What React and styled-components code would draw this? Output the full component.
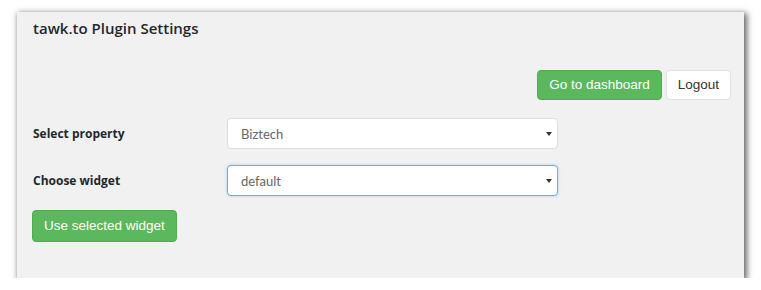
import React, { useState } from 'react';
import styled, { createGlobalStyle } from 'styled-components';

const GlobalStyle = createGlobalStyle`
    body {
        margin: 0;
        background: #fff;
    }
`;

export default function App() {
    const [property, setProperty] = useState('biztech');
    const [widget, setWidget] = useState('default');

    return (
        <Page>
            <GlobalStyle />
            <Panel>
                <Title>tawk.to Plugin Settings</Title>
                <Actions>
                    <Button $variant="success">Go to dashboard</Button>
                    <Button>Logout</Button>
                </Actions>
                <Form>
                    <Label htmlFor="property">Select property</Label>
                    <SelectWrap>
                        <Select
                            id="property"
                            value={property}
                            onChange={(e) => setProperty(e.target.value)}>
                            <option value="biztech">Biztech</option>
                        </Select>
                    </SelectWrap>
                    <Label htmlFor="widget">Choose widget</Label>
                    <SelectWrap>
                        <Select
                            id="widget"
                            $focused
                            value={widget}
                            onChange={(e) => setWidget(e.target.value)}>
                            <option value="default">default</option>
                        </Select>
                    </SelectWrap>
                </Form>
                <Footer>
                    <Button $variant="success" $tall>Use selected widget</Button>
                </Footer>
            </Panel>
        </Page>
    );
}

const Page = styled.div`
    padding: 12px 0 0 17px;
`;

const Panel = styled.div`
    box-sizing: border-box;
    width: 727px;
    height: 266px;
    background: #f1f1f1;
    padding: 6px 13px 0 15px;
    box-shadow: 2px 2px 6px 1px rgba(0, 0, 0, 0.6);
    display: flex;
    flex-direction: column;
`;

const Title = styled.h1`
    margin: 0 0 0 1px;
    font-family: 'Open Sans', sans-serif;
    font-size: 15px;
    font-weight: 600;
    line-height: 20px;
    color: #23282d;
`;

const Actions = styled.div`
    display: flex;
    justify-content: flex-end;
    gap: 4px;
    margin-top: 32px;
`;

const Button = styled.button`
    box-sizing: border-box;
    height: ${(p) => (p.$tall ? '32px' : '30px')};
    padding: 0 11px;
    border-radius: 4px;
    font-family: 'Liberation Sans', Arial, sans-serif;
    font-size: 13.5px;
    line-height: 1;
    cursor: pointer;
    border: 1px solid ${(p) => (p.$variant === 'success' ? '#4cae4c' : '#e2e2e2')};
    background: ${(p) => (p.$variant === 'success' ? '#5cb85c' : '#fff')};
    color: ${(p) => (p.$variant === 'success' ? '#fff' : '#333')};
`;

const Form = styled.div`
    display: grid;
    grid-template-columns: 195px 331px;
    row-gap: 16px;
    align-items: center;
    margin-top: 18px;
`;

const Label = styled.label`
    padding-left: 1px;
    font-family: 'Open Sans', sans-serif;
    font-size: 12px;
    font-weight: 700;
    color: #23282d;
`;

const SelectWrap = styled.div`
    position: relative;

    &::after {
        content: '';
        position: absolute;
        right: 6px;
        top: 14px;
        border-left: 3px solid transparent;
        border-right: 3px solid transparent;
        border-top: 4px solid #333;
        pointer-events: none;
    }
`;

const Select = styled.select`
    box-sizing: border-box;
    width: 331px;
    height: 31px;
    appearance: none;
    padding: 0 24px 0 13px;
    border-radius: 4px;
    background: #fff;
    font-family: Lato, sans-serif;
    font-size: 13px;
    color: #666;
    outline: none;
    border: 1px solid ${(p) => (p.$focused ? '#66afe9' : '#ddd')};
    box-shadow: ${(p) => (p.$focused ? '0 0 3px rgba(102, 175, 233, 0.5)' : 'none')};
`;

const Footer = styled.div`
    margin-top: 14px;
`;
